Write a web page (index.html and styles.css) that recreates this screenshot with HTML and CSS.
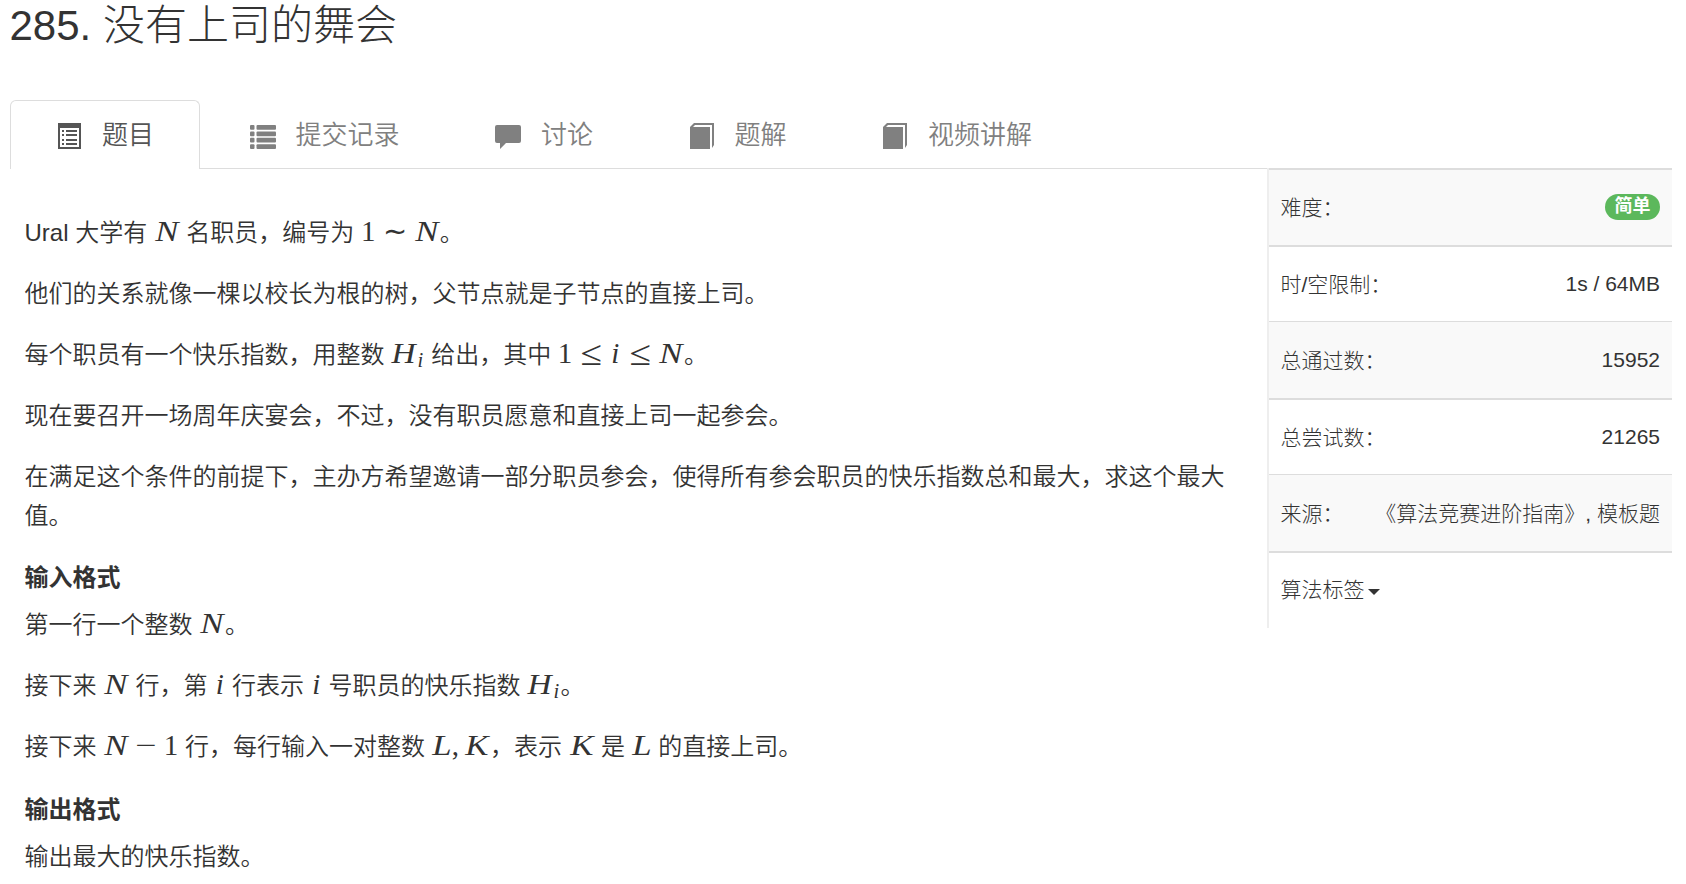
FILE: index.html
```html
<!DOCTYPE html>
<html lang="zh-CN">
<head>
    <meta charset="UTF-8">
    <meta name="viewport" content="width=device-width, initial-scale=1.0">
    <title>285. 没有上司的舞会</title>
    <link rel="stylesheet" href="styles.css">
</head>
<body>
    <div class="container">
        <h1 class="problem-title">285. 没有上司的舞会</h1>

        <ul class="nav-tabs">
            <li class="tab active">
                <svg class="icon" viewBox="0 0 26 26"><path fill-rule="evenodd" d="M2 0h23v26H2zM4 5v19h19V5zM6 7h2v2H6zM10 7h11v2H10zM6 11h2v2H6zM10 11h11v2H10zM6 16h2v2H6zM10 16h11v2H10zM6 20h2v2H6zM10 20h11v2H10z"/></svg>
                <span>题目</span>
            </li>
            <li class="tab">
                <svg class="icon" viewBox="0 0 26 26"><rect x="0" y="2" width="4.5" height="4.8" rx="1"/><rect x="6.5" y="2" width="19.5" height="4.8" rx="1"/><rect x="0" y="8.4" width="4.5" height="4.8" rx="1"/><rect x="6.5" y="8.4" width="19.5" height="4.8" rx="1"/><rect x="0" y="14.8" width="4.5" height="4.8" rx="1"/><rect x="6.5" y="14.8" width="19.5" height="4.8" rx="1"/><rect x="0" y="21.2" width="4.5" height="4.8" rx="1"/><rect x="6.5" y="21.2" width="19.5" height="4.8" rx="1"/></svg>
                <span>提交记录</span>
            </li>
            <li class="tab">
                <svg class="icon" viewBox="0 0 26 26"><path d="M2 2h22q2 0 2 2v14q0 2-2 2H11l-6 6v-6H2q-2 0-2-2V4q0-2 2-2z"/></svg>
                <span>讨论</span>
            </li>
            <li class="tab">
                <svg class="icon" viewBox="0 0 26 26"><path d="M1 4l4-4h20v22l-2 3V2H6L4 4h17v22H1z"/></svg>
                <span>题解</span>
            </li>
            <li class="tab">
                <svg class="icon" viewBox="0 0 26 26"><path d="M1 4l4-4h20v22l-2 3V2H6L4 4h17v22H1z"/></svg>
                <span>视频讲解</span>
            </li>
        </ul>

        <div class="row">
            <div class="content">
                <p>Ural 大学有 <span class="math"><i class="cap">N</i></span> 名职员，编号为 <span class="math"><b>1</b><b class="rel sim">∼</b><i class="cap">N</i></span>。</p>
                <p>他们的关系就像一棵以校长为根的树，父节点就是子节点的直接上司。</p>
                <p>每个职员有一个快乐指数，用整数 <span class="math"><i class="cap h">H</i><i class="low sub">i</i></span> 给出，其中 <span class="math"><b>1</b><b class="rel">≤</b><i class="low">i</i><b class="rel">≤</b><i class="cap">N</i></span>。</p>
                <p>现在要召开一场周年庆宴会，不过，没有职员愿意和直接上司一起参会。</p>
                <p>在满足这个条件的前提下，主办方希望邀请一部分职员参会，使得所有参会职员的快乐指数总和最大，求这个最大值。</p>

                <h4>输入格式</h4>
                <p>第一行一个整数 <span class="math"><i class="cap">N</i></span>。</p>
                <p>接下来 <span class="math"><i class="cap">N</i></span> 行，第 <span class="math"><i class="low">i</i></span> 行表示 <span class="math"><i class="low">i</i></span> 号职员的快乐指数 <span class="math"><i class="cap h">H</i><i class="low sub">i</i></span>。</p>
                <p>接下来 <span class="math"><i class="cap">N</i><b class="rel bin">−</b><b>1</b></span> 行，每行输入一对整数 <span class="math"><i class="cap l">L</i><b class="comma">,</b><i class="cap">K</i></span>，表示 <span class="math"><i class="cap">K</i></span> 是 <span class="math"><i class="cap l">L</i></span> 的直接上司。</p>

                <h4>输出格式</h4>
                <p>输出最大的快乐指数。</p>
            </div>

            <div class="sidebar">
                <div class="info thick"><span class="label">难度：</span><span class="badge">简单</span></div>
                <div class="info thick"><span class="label">时/空限制：</span><span>1s / 64MB</span></div>
                <div class="info"><span class="label">总通过数：</span><span>15952</span></div>
                <div class="info thick"><span class="label">总尝试数：</span><span>21265</span></div>
                <div class="info"><span class="label">来源：</span><span class="label">《算法竞赛进阶指南》, 模板题</span></div>
                <div class="info thick"><span class="label tags">算法标签<span class="caret"></span></span></div>
            </div>
        </div>
    </div>
</body>
</html>
```

FILE: styles.css
```css
body {
    margin: 0;
    background-color: #fff;
    color: #333;
    font-family: "Liberation Sans", "Noto Sans CJK SC", sans-serif;
    font-size: 24px;
    font-weight: 350;
    overflow: hidden;
}

.container {
    padding: 0 14px 0 9.5px;
}

.problem-title {
    box-sizing: border-box;
    margin: 0;
    height: 100px;
    padding-top: 1px;
    font-size: 42px;
    font-weight: 300;
    line-height: 50px;
}

/* Tabs */
.nav-tabs {
    display: flex;
    gap: 3px;
    height: 68px;
    margin: 0;
    padding: 0;
    list-style: none;
    border-bottom: 1px solid #ddd;
}

.tab {
    display: flex;
    align-items: center;
    gap: 20px;
    box-sizing: border-box;
    height: 69px;
    padding: 0 45px 0 45.5px;
    border: 1px solid transparent;
    border-bottom: 0;
    border-radius: 6px 6px 0 0;
    color: #808080;
    font-size: 26px;
}

.tab.active {
    color: #555;
    background-color: #fff;
    border-color: #ddd;
}

.tab span {
    padding-bottom: 6px;
}

.icon {
    width: 26px;
    height: 26px;
    margin-top: 2px;
    fill: currentColor;
}

.row {
    display: flex;
    align-items: flex-start;
}

/* Problem text */
.content {
    flex: 1;
    padding: 45px 20px 0 15px;
}

.content p {
    margin: 0 0 22.5px;
    line-height: 38.5px;
}

.content h4 {
    margin: 24px 0 9px;
    font-size: 24px;
    font-weight: bold;
    line-height: 38.4px;
}

/* Formulas */
.math {
    font-family: "Liberation Serif", serif;
    font-size: 29px;
    line-height: 1;
    white-space: nowrap;
}

.math i,
.math b {
    display: inline-block;
    width: 0.5em;
    font-weight: normal;
    text-align: center;
}

.math .cap {
    width: 0.888em;
    transform: scaleX(1.2);
}

.math .h {
    width: 0.86em;
    transform: scaleX(1.15);
}

.math .l {
    width: 0.681em;
}

.math .low {
    width: 0.385em;
}

.math .sub {
    width: 0.41em;
    font-size: 20.5px;
    vertical-align: -4px;
}

.math .rel {
    width: 0.76em;
    margin: 0 0.265em;
    transform: scale(1.35, 1.2);
}

.math .sim {
    width: 0.778em;
    margin: 0 0.278em;
    transform: none;
}

.math .bin {
    margin: 0 0.222em;
    transform: scaleX(1.3);
}

.math .comma {
    width: 0.278em;
    margin-right: 0.167em;
}

/* Problem info */
.sidebar {
    width: 403.5px;
    margin-top: -1px;
    margin-left: -1px;
    border-left: 2px solid #eee;
    font-size: 21px;
    font-weight: 300;
}

.info {
    display: flex;
    align-items: center;
    justify-content: space-between;
    box-sizing: border-box;
    height: 76.6px;
    padding: 0 12px;
    border-top: 1px solid #ddd;
}

.info.thick {
    border-top-width: 2px;
}

.info:nth-child(odd) {
    background-color: #f9f9f9;
}

.label {
    padding-bottom: 2px;
}

.label.tags {
    padding-bottom: 4px;
}

.badge {
    box-sizing: border-box;
    width: 55px;
    height: 26px;
    border-radius: 13px;
    background-color: #5cb85c;
    color: #fff;
    font-size: 18px;
    font-weight: bold;
    line-height: 24px;
    text-align: center;
}

.caret {
    display: inline-block;
    margin-left: 3px;
    vertical-align: middle;
    border-top: 6px solid;
    border-right: 6px solid transparent;
    border-left: 6px solid transparent;
}
```
